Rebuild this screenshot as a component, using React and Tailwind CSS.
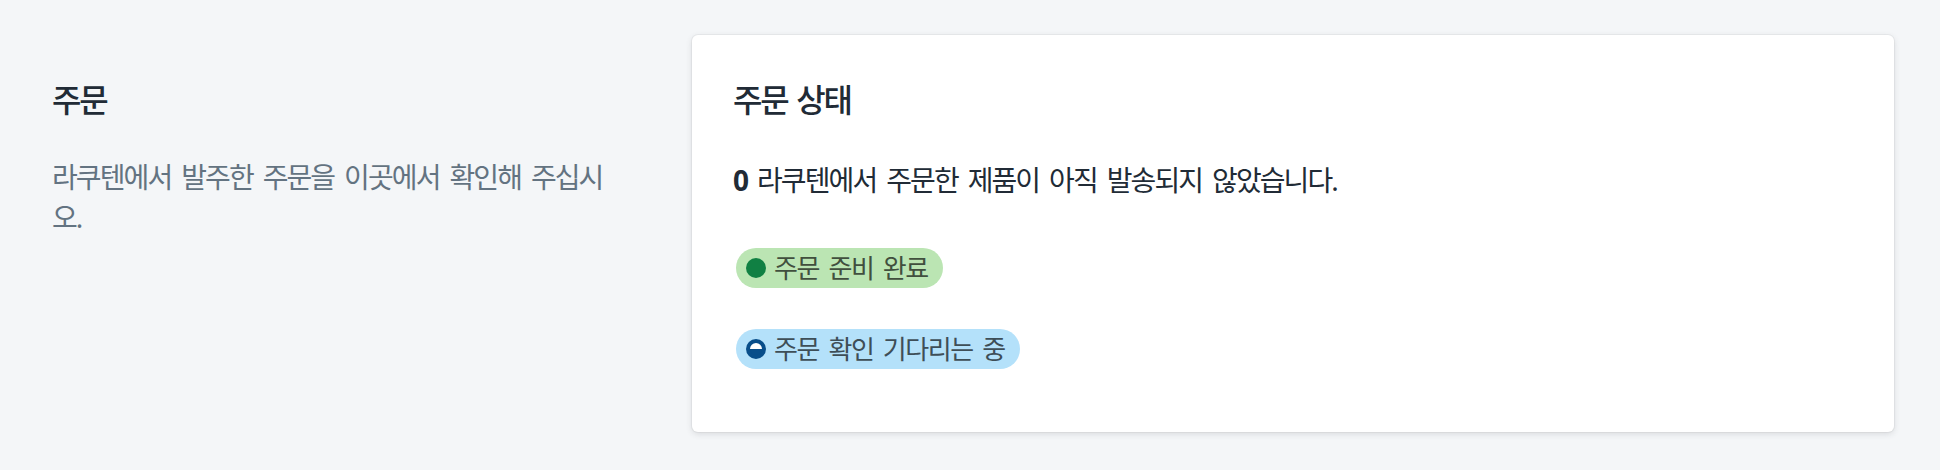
import React from 'react';

// Order status badge with a small progress pip
const StatusBadge = ({ tone, children }) => {
    const isDone = tone === 'success';
    return (
        <span
            className={
                isDone
                    ? 'inline-flex h-[40px] items-center rounded-full bg-[#bbe5b3] pl-[10px] pr-[15px] text-[#414f3e]'
                    : 'inline-flex h-[40px] items-center rounded-full bg-[#b4e1fa] pl-[10px] pr-[15px] text-[#3e4e57]'
            }
        >
            {isDone ? (
                <span className="h-[20px] w-[20px] shrink-0 rounded-full bg-[#108043]" />
            ) : (
                <span className="h-[20px] w-[20px] shrink-0 rounded-full border-[4px] border-[#084e8a] bg-[linear-gradient(to_top,#084e8a_50%,#ffffff_50%)]" />
            )}
            <span className="ml-[8px] text-[26px] leading-[40px] tracking-[-1.4px] [word-spacing:4px]">{children}</span>
        </span>
    );
};

function App() {
    return (
        <div className="flex min-h-[470px] gap-[40px] bg-[#f4f6f8] pl-[52px] pr-[46px] pt-[35px] font-[Noto_Sans,Noto_Sans_CJK_KR,sans-serif]">
            {/* Annotation column */}
            <div className="w-[600px] shrink-0 pr-[40px] pt-[41px]">
                <h2 className="text-[32px] font-medium leading-[48px] tracking-[-2.3px] text-[#212b36] [word-spacing:3px]">주문</h2>
                <p className="mt-[33px] text-[28px] leading-[40px] tracking-[-1.9px] text-[#637381] [word-spacing:4.5px]">
                    라쿠텐에서 발주한 주문을 이곳에서 확인해 주십시오.
                </p>
            </div>

            {/* Status card */}
            <div className="h-[397px] flex-1 rounded-[6px] bg-white px-[41px] pt-[41px] shadow-[0_0_0_1px_rgba(63,63,68,0.05),0_2px_6px_0_rgba(63,63,68,0.15)]">
                <h2 className="text-[32px] font-medium leading-[48px] tracking-[-2.3px] text-[#212b36] [word-spacing:3px]">주문 상태</h2>
                <p className="mt-[36px] text-[28px] leading-[40px] tracking-[-1.9px] text-[#212b36] [word-spacing:4.5px]">
                    <span className="font-bold">0</span> 라쿠텐에서 주문한 제품이 아직 발송되지 않았습니다.
                </p>
                <div className="ml-[3px] mt-[48px] flex flex-col items-start gap-[41px]">
                    <StatusBadge tone="success">주문 준비 완료</StatusBadge>
                    <StatusBadge tone="info">주문 확인 기다리는 중</StatusBadge>
                </div>
            </div>
        </div>
    );
}

export default App;
